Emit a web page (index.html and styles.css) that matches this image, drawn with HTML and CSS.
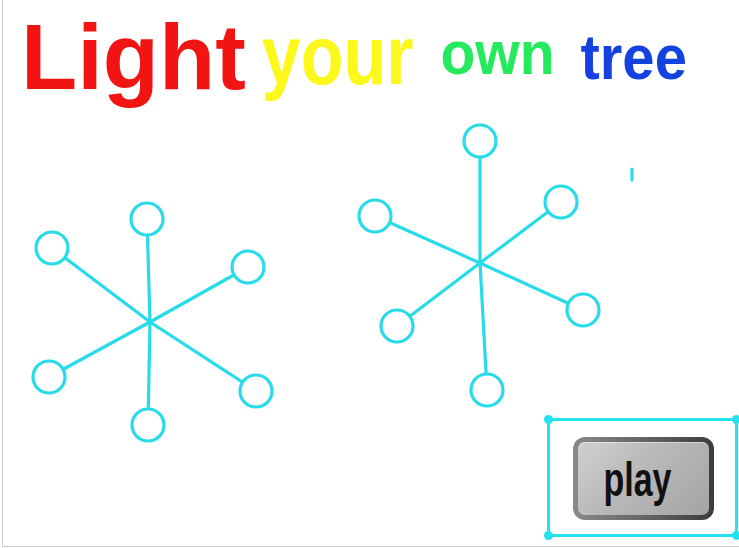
FILE: index.html
```html
<!DOCTYPE html>
<html lang="en">
<head>
    <meta charset="UTF-8">
    <meta name="viewport" content="width=device-width, initial-scale=1.0">
    <title>Light your own tree</title>
    <link rel="stylesheet" href="styles.css">
</head>
<body>
    <div class="stage">
        <h1 class="title">
            <span class="word word-light">Light</span>
            <span class="word word-your">your</span>
            <span class="word word-own">own</span>
            <span class="word word-tree">tree</span>
        </h1>

        <!-- snowflake sprites, drawn in page coordinates -->
        <svg class="sprites" width="736" height="546" viewBox="3 0 736 546">
            <g class="flake">
                <line x1="150" y1="322" x2="147" y2="219"/>
                <line x1="150" y1="322" x2="52" y2="248"/>
                <line x1="150" y1="322" x2="248" y2="267"/>
                <line x1="150" y1="322" x2="49" y2="377"/>
                <line x1="150" y1="322" x2="256" y2="391"/>
                <line x1="150" y1="322" x2="148" y2="425"/>
                <circle cx="147" cy="219" r="16"/>
                <circle cx="52" cy="248" r="16"/>
                <circle cx="248" cy="267" r="16"/>
                <circle cx="49" cy="377" r="16"/>
                <circle cx="256" cy="391" r="16"/>
                <circle cx="148" cy="425" r="16"/>
            </g>
            <g class="flake">
                <line x1="480" y1="263" x2="480" y2="141"/>
                <line x1="480" y1="263" x2="375" y2="216"/>
                <line x1="480" y1="263" x2="561" y2="202"/>
                <line x1="480" y1="263" x2="397" y2="326"/>
                <line x1="480" y1="263" x2="583" y2="310"/>
                <line x1="480" y1="263" x2="487" y2="390"/>
                <circle cx="480" cy="141" r="16"/>
                <circle cx="375" cy="216" r="16"/>
                <circle cx="561" cy="202" r="16"/>
                <circle cx="397" cy="326" r="16"/>
                <circle cx="583" cy="310" r="16"/>
                <circle cx="487" cy="390" r="16"/>
            </g>
            <line class="spark" x1="632" y1="169" x2="632" y2="180"/>
        </svg>

        <div class="selection">
            <span class="handle handle-tl"></span>
            <span class="handle handle-tr"></span>
            <span class="handle handle-bl"></span>
            <span class="handle handle-br"></span>
            <button class="btn-play"><span>play</span></button>
        </div>
    </div>
</body>
</html>
```

FILE: styles.css
```css
* {
    margin: 0;
    padding: 0;
    box-sizing: border-box;
}

body {
    font-family: 'Liberation Sans', Arial, Helvetica, sans-serif;
    background: #fff;
    overflow: hidden;
}

.stage {
    position: relative;
    margin-left: 2px;
    height: 547px;
    border-left: 1px solid #cfcfcf;
    border-bottom: 1px solid #cfcfcf;
    overflow: hidden;
}

/* word art title */
.title {
    display: flex;
    align-items: baseline;
    padding: 11px 0 0 18px;
    font-size: 92px;
    font-weight: bold;
    line-height: 1;
}

.word {
    display: inline-block;
    transform-origin: 50% 84.6%;
}

.word-light {
    color: #f21313;
}

.word-your {
    font-size: 70px;
    margin-left: 16px;
    color: #fdf81c;
    transform: translateY(-5px) scaleY(1.18);
}

.word-own {
    font-size: 57px;
    margin-left: 27px;
    color: #26ea5e;
    transform: translateY(-15px) scaleY(1.08);
}

.word-tree {
    font-size: 58px;
    margin-left: 26px;
    color: #1342df;
    transform: translateY(-10px) scaleY(1.1);
}

.sprites {
    position: absolute;
    left: 0;
    top: 0;
}

.flake line,
.spark {
    stroke: #27dce8;
    stroke-width: 3.2;
    stroke-linecap: round;
}

.flake circle {
    fill: #fff;
    stroke: #27dce8;
    stroke-width: 3.2;
}

/* selected sprite outline */
.selection {
    position: absolute;
    left: 544px;
    top: 418px;
    width: 191px;
    height: 119px;
    border: 3px solid #25e3ee;
    padding: 16px 0 0 23px;
}

.handle {
    position: absolute;
    width: 9px;
    height: 9px;
    border-radius: 50%;
    background: #25e3ee;
}

.handle-tl { left: -6px; top: -6px; }
.handle-tr { right: -6px; top: -6px; }
.handle-bl { left: -6px; bottom: -6px; }
.handle-br { right: -6px; bottom: -6px; }

.btn-play {
    display: flex;
    align-items: center;
    justify-content: center;
    width: 141px;
    height: 83px;
    padding: 0 12px 0 0;
    border: 5px solid transparent;
    border-radius: 12px;
    background:
        linear-gradient(135deg, #d0d0d0, #b8b8b8 45%, #a4a4a4) padding-box,
        linear-gradient(to right, #8a8a8a, #5e5e5e 60%, #3c3c3c) border-box;
    box-shadow: inset 0 1px 0 rgba(255, 255, 255, 0.45);
    font-family: inherit;
    font-size: 34px;
    font-weight: bold;
    color: #111;
    cursor: pointer;
}

.btn-play span {
    display: inline-block;
    line-height: 1;
    transform: translateY(0) scaleY(1.4);
}
```
